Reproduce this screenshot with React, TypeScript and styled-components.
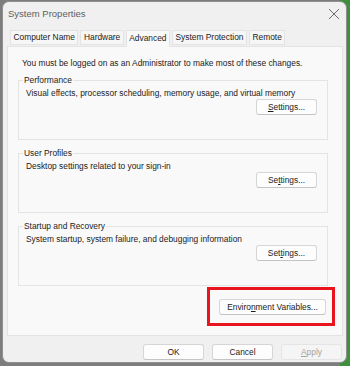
import React from 'react';
import styled, { createGlobalStyle } from 'styled-components';

const GlobalStyle = createGlobalStyle`
  html, body {
    margin: 0;
    padding: 0;
    background: #7d7d7d;
  }
  body {
    font-family: 'Liberation Sans', Arial, sans-serif;
    width: 350px;
    height: 366px;
    overflow: hidden;
  }
`;

const tabs = ['Computer Name', 'Hardware', 'Advanced', 'System Protection', 'Remote'];

const groups = [
  { title: 'Performance', desc: 'Visual effects, processor scheduling, memory usage, and virtual memory', pre: '', key: 'S', post: 'ettings...' },
  { title: 'User Profiles', desc: 'Desktop settings related to your sign-in', pre: 'Se', key: 't', post: 'tings...' },
  { title: 'Startup and Recovery', desc: 'System startup, system failure, and debugging information', pre: 'Set', key: 't', post: 'ings...' },
];

const App: React.FC = () => {
  return (
    <>
      <GlobalStyle />
      <Screen>
        <Window>
          <TitleBar>
            <Title>System Properties</Title>
            <CloseIcon width="12" height="12" viewBox="0 0 12 12">
              <path d="M1 1 L11 11 M11 1 L1 11" stroke="#6b6b6b" strokeWidth="1" fill="none" />
            </CloseIcon>
          </TitleBar>

          <TabRow>
            {tabs.map((t) => (
              <Tab key={t} selected={t === 'Advanced'}>
                {t}
              </Tab>
            ))}
          </TabRow>

          <Panel>
            <Notice>You must be logged on as an Administrator to make most of these changes.</Notice>
            {groups.map((g) => (
              <Group key={g.title}>
                <Legend>{g.title}</Legend>
                <Desc>{g.desc}</Desc>
                <GroupActions>
                  <Button>
                    {g.pre}
                    <u>{g.key}</u>
                    {g.post}
                  </Button>
                </GroupActions>
              </Group>
            ))}
            <EnvRow>
              <EnvButton>
                Enviro<u>n</u>ment Variables...
                <Highlight />
              </EnvButton>
            </EnvRow>
          </Panel>

          <Footer>
            <Button>OK</Button>
            <Button>Cancel</Button>
            <Button disabled>
              <u>A</u>pply
            </Button>
          </Footer>
        </Window>
      </Screen>
    </>
  );
};

// Styled Components

const Screen = styled.div`
  display: flex;
  padding: 1px 3px 3px 2px;
  height: 366px;
  box-sizing: border-box;
  background: linear-gradient(to right, #7d7d7d 0, #7d7d7d 340px, #3f8f3f 340px);
`;

const Window = styled.div`
  flex: 1;
  display: flex;
  flex-direction: column;
  background: #f0f0f0;
  border: 1px solid #8f8f8f;
  border-radius: 7px;
  overflow: hidden;
  box-sizing: border-box;
`;

const TitleBar = styled.div`
  display: flex;
  align-items: flex-start;
  justify-content: space-between;
  height: 27px;
  box-sizing: border-box;
  padding: 6px 4px 0 5px;
  flex-shrink: 0;
`;

const Title = styled.span`
  font-size: 9.5px;
  line-height: 12px;
  color: #5e5e5e;
`;

const CloseIcon = styled.svg`
  margin-right: 2px;
`;

const TabRow = styled.div`
  display: flex;
  align-items: flex-end;
  gap: 2px;
  padding-left: 7px;
  height: 17px;
  position: relative;
  z-index: 1;
`;

const Tab = styled.div<{ selected: boolean }>`
  font-size: 8.4px;
  color: #1b1b1b;
  padding: 0 2.5px;
  height: ${(p) => (p.selected ? '16px' : '13px')};
  line-height: ${(p) => (p.selected ? '14px' : '13px')};
  margin-bottom: ${(p) => (p.selected ? '-1px' : '1px')};
  background: ${(p) => (p.selected ? '#f9f9f9' : '#f6f6f6')};
  border: 1px solid #e3e3e3;
  border-bottom: ${(p) => (p.selected ? 'none' : '1px solid #e3e3e3')};
  white-space: nowrap;
`;

const Panel = styled.div`
  display: flex;
  flex-direction: column;
  margin: 0 3px 0 4px;
  height: 290px;
  box-sizing: border-box;
  background: #f9f9f9;
  border: 1px solid #e3e3e3;
  padding: 11px 14px 0 10px;
`;

const Notice = styled.div`
  font-size: 8.4px;
  line-height: 11px;
  color: #1b1b1b;
  padding-left: 4px;
  margin-bottom: 6px;
`;

const Group = styled.fieldset`
  margin: 0 0 8px;
  padding: 3px 10px 7px 7px;
  border: 1px solid #e4e4e4;
  border-radius: 0;
  display: flex;
  flex-direction: column;
  height: 65px;
  box-sizing: border-box;
`;

const Legend = styled.legend`
  font-size: 8.4px;
  color: #1b1b1b;
  padding: 0 1px;
  margin-left: -3px;
  line-height: 10px;
`;

const Desc = styled.div`
  font-size: 8.4px;
  color: #1b1b1b;
  line-height: 11px;
`;

const GroupActions = styled.div`
  display: flex;
  justify-content: flex-end;
  margin-top: auto;
`;

const Button = styled.button`
  width: 61px;
  height: 16px;
  padding: 0;
  font-family: 'Liberation Sans', Arial, sans-serif;
  font-size: 8.4px;
  color: #1b1b1b;
  background: #fdfdfd;
  border: 1px solid #d6d6d6;
  border-bottom-color: #c4c4c4;
  border-radius: 3px;

  u {
    text-underline-offset: 1px;
  }

  &:disabled {
    color: #a3a3a3;
    background: #f5f5f5;
    border-color: #e4e4e4;
  }
`;

const EnvRow = styled.div`
  display: flex;
  justify-content: flex-end;
  padding-right: 2px;
  margin-top: 5px;
`;

const EnvButton = styled(Button)`
  width: 107px;
  position: relative;
`;

const Highlight = styled.span`
  position: absolute;
  left: -13px;
  right: -10px;
  top: -13px;
  bottom: -12px;
  border: 3px solid #e8141e;
  pointer-events: none;
`;

const Footer = styled.div`
  display: flex;
  justify-content: flex-end;
  gap: 8px;
  padding: 8px 4px 0 0;
`;

export default App;
